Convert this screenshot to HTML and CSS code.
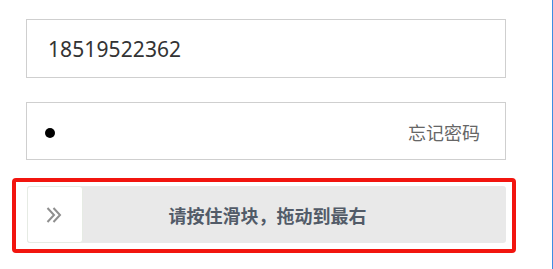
FILE: index.html
```html
<!DOCTYPE html>
<html lang="zh-CN">
<head>
<meta charset="utf-8">
<title>登录</title>
<link rel="stylesheet" href="styles.css">
</head>
<body>
<div class="page">
  <form class="login">
    <div class="field">
      <span class="value">18519522362</span>
    </div>
    <div class="field field-pass">
      <span class="dot"></span>
      <span class="forgot">忘记密码</span>
    </div>
    <div class="slider">
      <div class="handle">
        <svg width="16" height="16" viewBox="0 0 16 16" aria-hidden="true">
          <path d="M1.5 1 L8 8 L1.5 15 M7.5 1 L14 8 L7.5 15" fill="none" stroke="#8f8f8f" stroke-width="2"/>
        </svg>
      </div>
      <span class="slider-text">请按住滑块，拖动到最右</span>
    </div>
    <div class="highlight"></div>
  </form>
  <div class="edge"></div>
</div>
</body>
</html>
```

FILE: styles.css
```css
* { box-sizing: border-box; }
html, body { margin: 0; padding: 0; background: #fff; }
body {
  font-family: "Noto Sans", "Noto Sans CJK SC", sans-serif;
  width: 553px;
  height: 269px;
  overflow: hidden;
}
.page {
  position: relative;
  width: 553px;
  height: 269px;
  padding: 19px 0 0 26px;
}
.login {
  position: relative;
  width: 480px;
  display: flex;
  flex-direction: column;
}
.field {
  height: 59px;
  border: 1px solid #cfcfcf;
  display: flex;
  align-items: center;
  padding: 0 25px 0 21px;
  background: #fff;
}
.value {
  font-size: 21px;
  color: #333;
  letter-spacing: 0.1px;
}
.field-pass {
  margin-top: 24px;
  height: 58px;
  justify-content: space-between;
  padding-left: 18px;
}
.dot {
  width: 10px;
  height: 10px;
  border-radius: 50%;
  background: #000;
  margin-top: 3px;
}
.forgot {
  font-size: 18px;
  color: #666;
  font-family: "Noto Sans CJK SC", sans-serif;
  margin-top: 2px;
}
.slider {
  position: relative;
  margin-top: 26px;
  margin-left: 1px;
  width: 479px;
  height: 57px;
  background: #e9e9e9;
  border-radius: 3px;
  display: flex;
  align-items: center;
  justify-content: center;
}
.handle {
  position: absolute;
  left: 0;
  top: 0;
  width: 56px;
  height: 57px;
  background: #fff;
  border: 1px solid #e6ebe4;
  border-radius: 3px;
  display: flex;
  align-items: center;
  justify-content: center;
  padding-right: 3px;
}
.slider-text {
  font-family: "Noto Sans CJK SC", sans-serif;
  font-size: 18px;
  font-weight: bold;
  color: #525b68;
  margin-left: 2px;
}
.highlight {
  position: absolute;
  left: -14px;
  top: 159px;
  width: 504px;
  height: 75px;
  border: 4px solid #f2150f;
  border-radius: 4px;
  pointer-events: none;
}
.edge {
  position: absolute;
  right: 0;
  top: 0;
  width: 1px;
  height: 269px;
  background: #3d8ee2;
}
```
